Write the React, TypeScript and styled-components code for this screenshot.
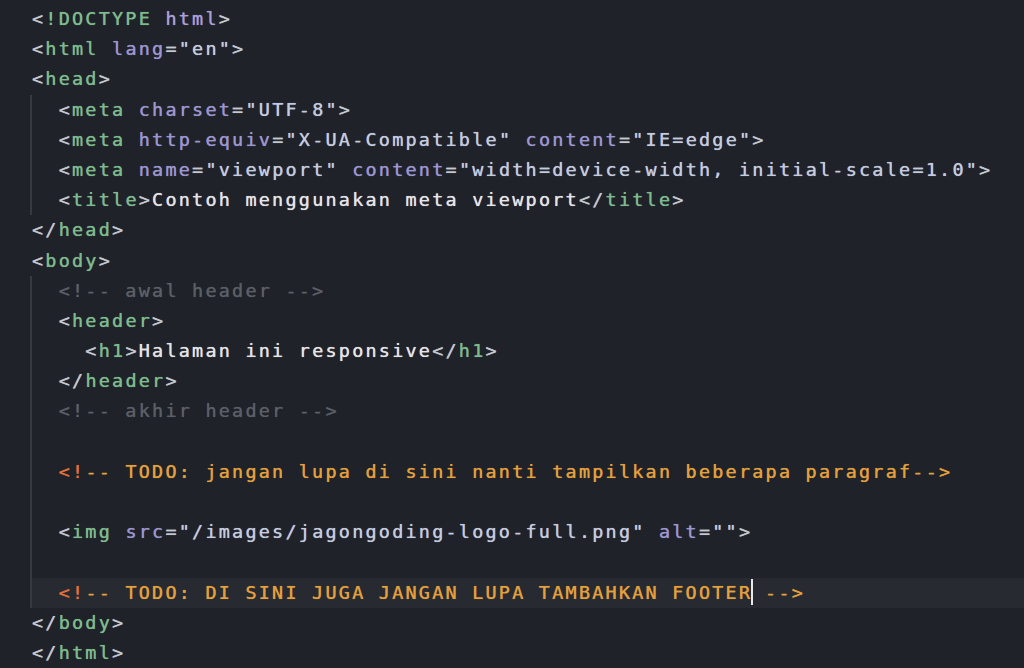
import React from "react";
import styled, { createGlobalStyle } from "styled-components";

const GlobalStyle = createGlobalStyle`
  html, body {
    margin: 0;
    padding: 0;
    background: #1f2228;
  }
  #root {
    min-height: 668px;
  }
`;

type Kind = "punc" | "tag" | "kw" | "attr" | "str" | "text" | "comment" | "todo" | "todoMark";

const colors: Record<Kind, string> = {
  punc: "#c4c8cf",
  tag: "#7dbb8e",
  kw: "#a89fd8",
  attr: "#9b96d0",
  str: "#c3cbdf",
  text: "#e4e4e6",
  comment: "#5b5f67",
  todo: "#e3a03e",
  todoMark: "#e0703c",
};

const Editor = styled.div`
  box-sizing: border-box;
  width: 1024px;
  height: 668px;
  overflow: hidden;
  background: #1f2228;
  padding: 4px 0 0 32px;
  font-family: "DejaVu Sans Mono", "Liberation Mono", monospace;
  font-size: 18.5px;
  letter-spacing: 2.2px;
  line-height: 30.2px;
`;

const Block = styled.div`
  margin-left: -2px;
  border-left: 2px solid #363a41;
`;

const Line = styled.div<{ $active?: boolean }>`
  height: 30.2px;
  white-space: pre;
  background: ${(p) => (p.$active ? "#272a31" : "transparent")};
`;

const Tok = styled.span<{ $k: Kind }>`
  color: ${(p) => colors[p.$k]};
  text-shadow: 0 0 0.7px ${(p) => colors[p.$k]};
`;

const Caret = styled.span`
  display: inline-block;
  width: 0;
  height: 26px;
  vertical-align: middle;
  margin-top: -3px;
  border-left: 2.5px solid #e8e8ea;
  margin-left: -1px;
  margin-right: -1.5px;
`;

type Attr = [string, string];

const Attrs = ({ list }: { list: Attr[] }) => (
  <>
    {list.map(([n, v], i) => (
      <React.Fragment key={i}>
        {" "}
        <Tok $k="attr">{n}</Tok>
        <Tok $k="punc">=</Tok>
        <Tok $k="str">{`"${v}"`}</Tok>
      </React.Fragment>
    ))}
  </>
);

const Open = ({ name, attrs = [] }: { name: string; attrs?: Attr[] }) => (
  <>
    <Tok $k="punc">&lt;</Tok>
    <Tok $k="tag">{name}</Tok>
    <Attrs list={attrs} />
    <Tok $k="punc">&gt;</Tok>
  </>
);

const Close = ({ name }: { name: string }) => (
  <>
    <Tok $k="punc">&lt;/</Tok>
    <Tok $k="tag">{name}</Tok>
    <Tok $k="punc">&gt;</Tok>
  </>
);

const Todo = ({ body }: { body: string }) => (
  <>
    <Tok $k="todoMark">&lt;!</Tok>
    <Tok $k="todo">{"-- " + body}</Tok>
  </>
);

export default function App() {
  return (
    <>
      <GlobalStyle />
      <Editor>
        <Line>
          <Tok $k="punc">&lt;</Tok>
          <Tok $k="tag">!DOCTYPE</Tok> <Tok $k="kw">html</Tok>
          <Tok $k="punc">&gt;</Tok>
        </Line>
        <Line>
          <Open name="html" attrs={[["lang", "en"]]} />
        </Line>
        <Line>
          <Open name="head" />
        </Line>
        <Block>
          <Line>
            {"  "}
            <Open name="meta" attrs={[["charset", "UTF-8"]]} />
          </Line>
          <Line>
            {"  "}
            <Open
              name="meta"
              attrs={[
                ["http-equiv", "X-UA-Compatible"],
                ["content", "IE=edge"],
              ]}
            />
          </Line>
          <Line>
            {"  "}
            <Open
              name="meta"
              attrs={[
                ["name", "viewport"],
                ["content", "width=device-width, initial-scale=1.0"],
              ]}
            />
          </Line>
          <Line>
            {"  "}
            <Open name="title" />
            <Tok $k="text">Contoh menggunakan meta viewport</Tok>
            <Close name="title" />
          </Line>
        </Block>
        <Line>
          <Close name="head" />
        </Line>
        <Line>
          <Open name="body" />
        </Line>
        <Block>
          <Line>
            <Tok $k="comment">{"  <!-- awal header -->"}</Tok>
          </Line>
          <Line>
            {"  "}
            <Open name="header" />
          </Line>
          <Line>
            {"    "}
            <Open name="h1" />
            <Tok $k="text">Halaman ini responsive</Tok>
            <Close name="h1" />
          </Line>
          <Line>
            {"  "}
            <Close name="header" />
          </Line>
          <Line>
            <Tok $k="comment">{"  <!-- akhir header -->"}</Tok>
          </Line>
          <Line> </Line>
          <Line>
            {"  "}
            <Todo body="TODO: jangan lupa di sini nanti tampilkan beberapa paragraf" />
            <Tok $k="todo">--&gt;</Tok>
          </Line>
          <Line> </Line>
          <Line>
            {"  "}
            <Open
              name="img"
              attrs={[
                ["src", "/images/jagongoding-logo-full.png"],
                ["alt", ""],
              ]}
            />
          </Line>
          <Line> </Line>
          <Line $active>
            {"  "}
            <Todo body="TODO: DI SINI JUGA JANGAN LUPA TAMBAHKAN FOOTER" />
            <Caret />
            <Tok $k="todo"> --&gt;</Tok>
          </Line>
        </Block>
        <Line>
          <Close name="body" />
        </Line>
        <Line>
          <Close name="html" />
        </Line>
      </Editor>
    </>
  );
}
